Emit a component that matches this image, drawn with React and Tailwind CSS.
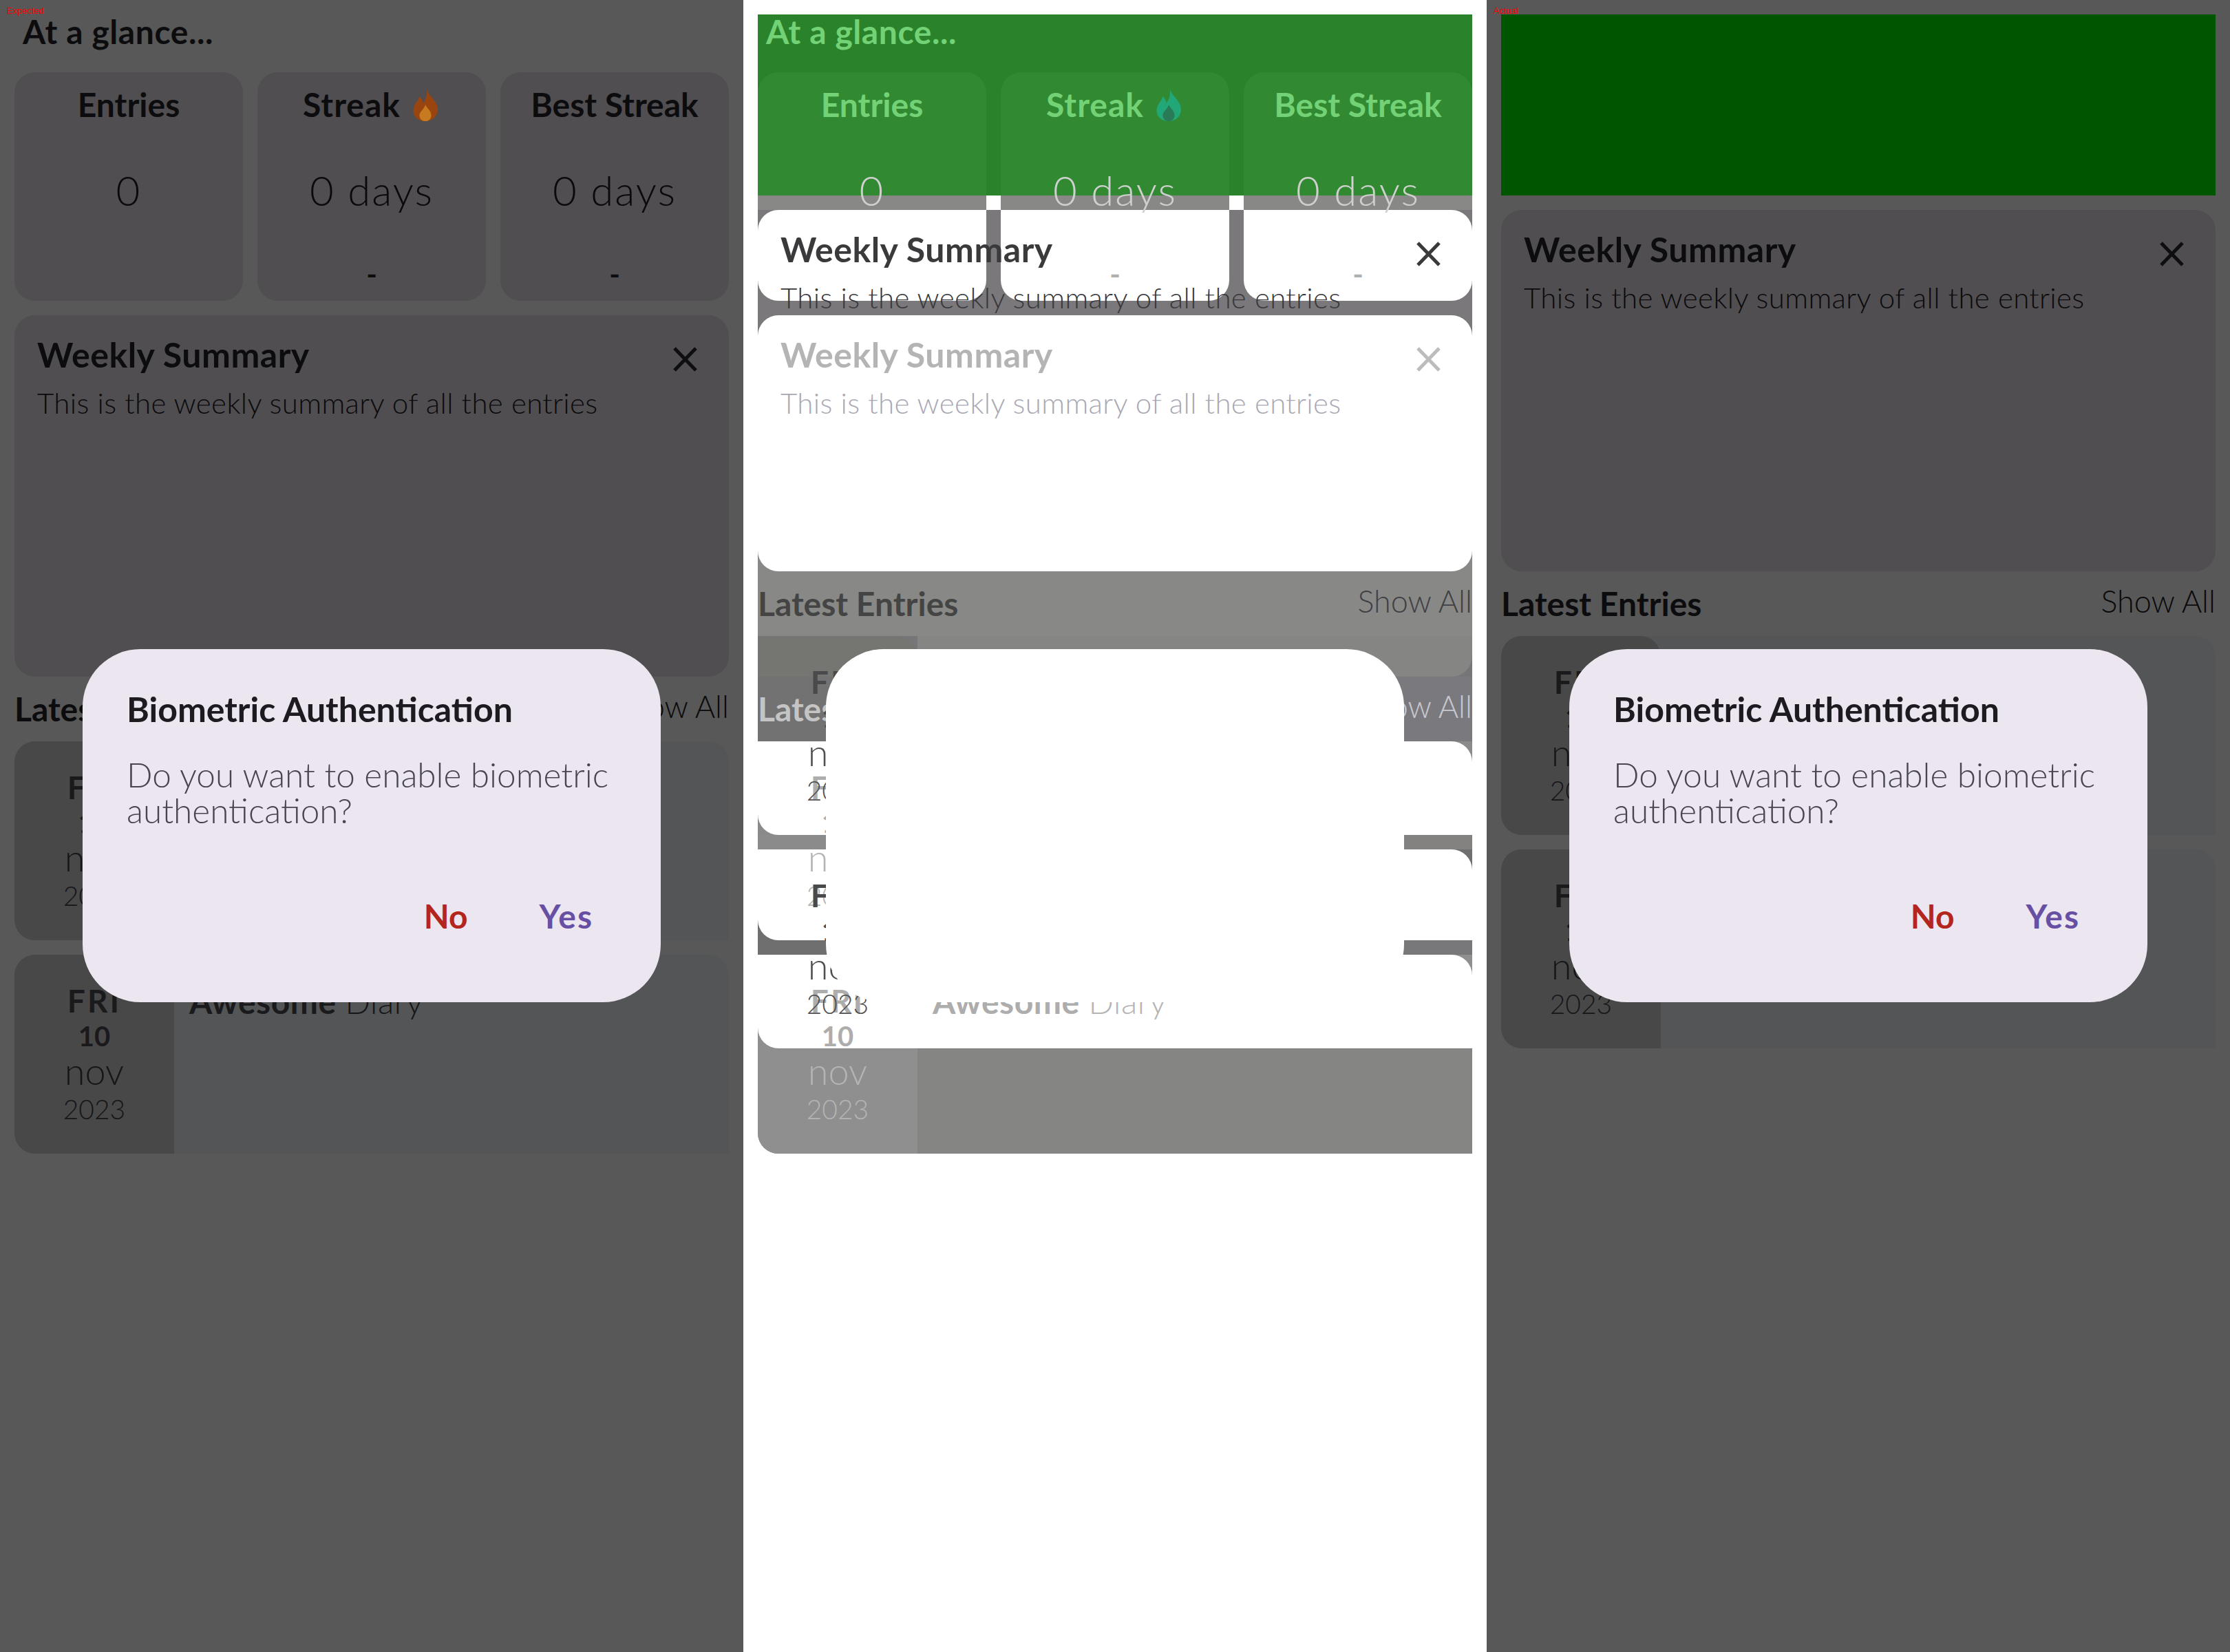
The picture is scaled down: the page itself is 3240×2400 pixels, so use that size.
import React from 'react';

const expectedTone = {
  head: 'text-[#0c0c0e]', value: 'text-[#0a0a0c]', dash: 'text-[#0c0c0e]', weekly: 'text-[#0c0c0e]', weeklyBody: 'text-[#0a0a0c]',
  latest: 'text-[#0c0c0e]', showAll: 'text-[#0a0a0c]', entryHead: 'text-[#1a1a1c]', entryBody: 'text-[#161618]',
  card: 'bg-[#504e50]', entry: 'bg-[#545556]', date: 'bg-[#484848]', cross: '#0e0e10', flameOuter: '#9a4410', flameInner: '#c87a20',
};

const actualTone = { ...expectedTone, chart: 'bg-[#005500]' };

const expectedGhost = {
  head: 'text-[#74d276]', value: 'text-[#d0d0d0]', dash: 'text-[#b0b0b0]', weekly: 'text-[#b4b4b4]', weeklyBody: 'text-[#a8a8b4]',
  latest: 'text-[#c4c4c4]', showAll: 'text-[#c8c8d0]', entryHead: 'text-[#adadad]', entryBody: 'text-[#b4b4b4]',
  card: 'bg-transparent', entry: 'bg-transparent', date: 'bg-transparent', cross: '#bcbcbc', flameOuter: '#22a878', flameInner: '#2a7a58',
};

const actualGhost = {
  ...expectedGhost, weekly: 'text-[#3a3a3c]', weeklyBody: 'text-[#38383c]', latest: 'text-[#444444]', showAll: 'text-[#404044]',
  entryHead: 'text-[#4a4a4c]', entryBody: 'text-[#505052]', cross: '#3a3a3c', chart: 'bg-transparent',
};

function Flame({ tone }) {
  return (
    <svg width="44" height="48" viewBox="0 0 24 28" className="ml-[14px]">
      <path d="M13 0C14 6 20 9 22 15C24 22 19 28 12 28C5 28 1 23 2 17C3 13 6 11 7 7C9 9 10 11 10 13C12 10 14 6 13 0Z" fill={tone.flameOuter} />
      <path d="M12 14C13 17 17 19 17 23C17 26 15 28 12 28C9 28 7 26 7 23C7 20 11 18 12 14Z" fill={tone.flameInner} />
    </svg>
  );
}

function StatCard({ tone, title, value, dash, flame }) {
  return (
    <div className={`h-[332px] rounded-[30px] flex flex-col items-center ${tone.card}`}>
      <div className={`pt-[19px] h-[75px] flex items-center text-[48px] leading-[56px] font-bold ${tone.head}`}>
        <span className={flame ? 'tracking-[1px]' : ''}>{title}</span>
        {flame && <Flame tone={tone} />}
      </div>
      <div className={`mt-[64px] text-[60px] leading-[64px] font-light tracking-[2px] ${tone.value}`}>{value}</div>
      {dash && <div className={`mt-[70px] text-[42px] leading-[40px] font-bold ${tone.dash}`}>-</div>}
    </div>
  );
}

function WeeklyCard({ tone }) {
  return (
    <div className={`h-[525px] rounded-[30px] px-[33px] pt-[29px] ${tone.card}`}>
      <div className="flex justify-between items-start">
        <div className={`text-[50px] leading-[56px] font-bold tracking-[0.5px] ${tone.weekly}`}>Weekly Summary</div>
        <svg width="37" height="36" viewBox="0 0 37 36" className="mt-[17px] mr-[12px]">
          <path d="M3 2L34 34M34 2L3 34" stroke={tone.cross} strokeWidth="5" />
        </svg>
      </div>
      <div className={`mt-[14px] text-[42px] leading-[56px] font-light tracking-[0.37px] ${tone.weeklyBody}`}>This is the weekly summary of all the entries</div>
    </div>
  );
}

function LatestHeader({ tone }) {
  return (
    <div className="h-[94px] flex justify-between items-start">
      <div className={`pt-[19px] text-[48px] leading-[56px] font-bold ${tone.latest}`}>Latest Entries</div>
      <div className={`pt-[15px] text-[45px] leading-[56px] font-light ${tone.showAll}`}>Show All</div>
    </div>
  );
}

function EntryCard({ tone }) {
  return (
    <div className={`h-[289px] rounded-l-[30px] rounded-tr-[30px] flex ${tone.entry}`}>
      <div className={`w-[232px] rounded-l-[30px] rounded-tr-[30px] pt-[41px] flex flex-col items-center ${tone.date}`}>
        <div className={`text-[46px] leading-[52px] font-bold tracking-[3px] ${tone.entryHead}`}>FRI</div>
        <div className={`text-[40px] leading-[50px] font-bold ${tone.entryHead}`}>10</div>
        <div className={`text-[54px] leading-[52px] font-light ${tone.entryBody}`}>nov</div>
        <div className={`text-[39px] leading-[58px] font-light ${tone.entryBody}`}>2023</div>
      </div>
      <div className={`pl-[22px] pt-[40px] text-[48px] leading-[56px] tracking-[0.5px] ${tone.entryBody}`}>
        <span className={`font-bold ${tone.entryHead}`}>Awesome</span> <span className="font-light">Diary</span>
      </div>
    </div>
  );
}

function LatestList({ tone }) {
  return (
    <div>
      <LatestHeader tone={tone} />
      <div className="flex flex-col gap-[21px]">
        <EntryCard tone={tone} />
        <EntryCard tone={tone} />
      </div>
    </div>
  );
}

function ExpectedScreen({ tone }) {
  return (
    <div className="px-[21px]">
      <div className={`h-[105px] pt-[18px] pl-[12px] text-[48px] leading-[56px] font-bold tracking-[0.6px] ${tone.head}`}>At a glance...</div>
      <div className="grid grid-cols-3 gap-[21px] mb-[21px]">
        <StatCard tone={tone} title="Entries" value="0" />
        <StatCard tone={tone} title="Streak" value="0 days" dash flame />
        <StatCard tone={tone} title="Best Streak" value="0 days" dash />
      </div>
      <WeeklyCard tone={tone} />
      <LatestList tone={tone} />
    </div>
  );
}

function ActualScreen({ tone }) {
  return (
    <div className="px-[21px] pt-[21px]">
      <div className={`h-[263px] mb-[21px] ${tone.chart}`} />
      <WeeklyCard tone={tone} />
      <LatestList tone={tone} />
    </div>
  );
}

function Dialog({ blank }) {
  if (blank) {
    return <div className="absolute left-[120px] top-[943px] w-[840px] h-[513px] rounded-[84px] bg-white" />;
  }
  return (
    <div className="absolute left-[120px] top-[943px] w-[840px] h-[513px] rounded-[84px] bg-[#ece6f0] pl-[64px] pt-[59px]">
      <div className="text-[50px] leading-[56px] font-bold text-[#1d1b20]">Biometric Authentication</div>
      <div className="mt-[41px] text-[49.5px] leading-[52px] font-light text-[#49454f] whitespace-nowrap">
        Do you want to enable biometric
        <br />
        authentication?
      </div>
      <div className="mt-[100px] pr-[98px] flex justify-end gap-[104px] text-[48px] leading-[56px] font-bold">
        <span className="text-[#b3261e]">No</span>
        <span className="text-[#6750a4] tracking-[2px]">Yes</span>
      </div>
    </div>
  );
}

function DiffBands() {
  return (
    <div className="flex flex-col px-[21px] pt-[21px]">
      {/* chart against the stat cards */}
      <div className="h-[263px] bg-[#2a832a] pt-[84px] grid grid-cols-3 gap-[21px]">
        <div className="bg-[#318a31] rounded-t-[30px]" />
        <div className="bg-[#318a31] rounded-t-[30px]" />
        <div className="bg-[#318a31] rounded-t-[30px]" />
      </div>
      <div className="h-[21px] grid grid-cols-3 gap-[21px]">
        <div className="bg-[#888986]" />
        <div className="bg-[#888986]" />
        <div className="bg-[#888986]" />
      </div>
      <div className="h-[132px] bg-[#7a787a] grid grid-cols-3 gap-[21px]">
        <div className="bg-white rounded-tl-[30px] rounded-b-[30px]" />
        <div className="bg-white rounded-b-[30px]" />
        <div className="bg-white rounded-tr-[30px] rounded-b-[30px]" />
      </div>
      <div className="h-[21px] bg-[#7a787a]" />
      <div className="h-[372px] bg-[linear-gradient(#7a787a_50%,#888986_50%)]">
        <div className="h-full bg-white rounded-[30px]" />
      </div>
      <div className="h-[94px] bg-[#888986]" />
      <div className="h-[59px] bg-[#767678] flex">
        <div className="w-[232px] bg-[#757571] rounded-tr-[30px]" />
        <div className="flex-1 bg-[#858683] rounded-br-[30px]" />
      </div>
      <div className="h-[94px] bg-[#7a7a7e] flex">
        <div className="w-[232px] bg-[#727272]" />
      </div>
      <div className="h-[136px] bg-[#8a8a8a]">
        <div className="h-full bg-white rounded-tr-[30px] rounded-bl-[30px]" />
      </div>
      <div className="h-[21px] bg-[#838280] flex">
        <div className="w-[232px] bg-[#8b8b8b]" />
      </div>
      <div className="h-[132px] bg-[#6f6f6f]">
        <div className="h-full bg-white rounded-tr-[30px] rounded-bl-[30px]" />
      </div>
      <div className="h-[21px] bg-[#78787a] flex">
        <div className="w-[232px] bg-[#6f6f6f]" />
      </div>
      <div className="h-[136px] bg-[#8f8f8f]">
        <div className="h-full bg-white rounded-tr-[30px] rounded-bl-[30px]" />
      </div>
      <div className="h-[153px] bg-[#858583] flex rounded-bl-[30px] overflow-hidden">
        <div className="w-[232px] bg-[#8f8f8f]" />
      </div>
    </div>
  );
}

function Panel({ label, children, bg }) {
  return (
    <div className={`relative w-[1080px] h-[2400px] overflow-hidden ${bg}`}>
      {children}
      {label && <div className="absolute left-[10px] top-[9px] text-[13px] leading-[14px] text-[#ff0000] font-['Liberation_Sans',sans-serif]">{label}</div>}
    </div>
  );
}

export default function App() {
  return (
    <div className="flex w-[3240px] h-[2400px] font-['Lato',sans-serif]">
      <Panel label="Expected" bg="bg-[#585858]">
        <ExpectedScreen tone={expectedTone} />
        <Dialog />
      </Panel>
      <Panel bg="bg-white">
        <DiffBands />
        <div className="absolute inset-0">
          <ExpectedScreen tone={expectedGhost} />
        </div>
        <div className="absolute inset-0">
          <ActualScreen tone={actualGhost} />
        </div>
        <Dialog blank />
      </Panel>
      <Panel label="Actual" bg="bg-[#585858]">
        <ActualScreen tone={actualTone} />
        <Dialog />
      </Panel>
    </div>
  );
}
